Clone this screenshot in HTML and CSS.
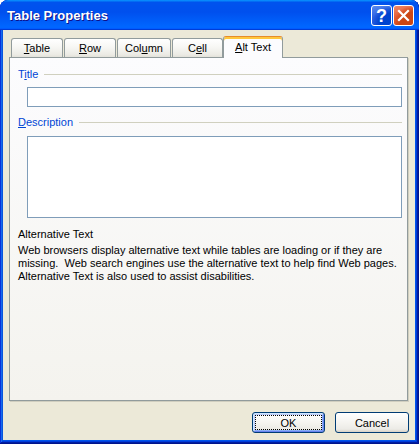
FILE: index.html
```html
<!DOCTYPE html>
<html>
<head>
<meta charset="utf-8">
<title>Table Properties</title>
<link rel="stylesheet" href="styles.css">
</head>
<body>
<div class="window">
  <div class="titlebar">
    <span class="title">Table Properties</span>
    <div class="controls">
      <span class="ctl help">?</span>
      <span class="ctl close">
        <svg width="13" height="13" viewBox="0 0 13 13"><path d="M2 2 L11 11 M11 2 L2 11" stroke="#fff" stroke-width="2.2" stroke-linecap="square"/></svg>
      </span>
    </div>
  </div>
  <div class="client">
    <div class="tabs">
      <div class="tab w52"><u>T</u>able</div>
      <div class="tab w52"><u>R</u>ow</div>
      <div class="tab w54">Col<u>u</u>mn</div>
      <div class="tab w51">C<u>e</u>ll</div>
      <div class="tab sel"><u>A</u>lt Text</div>
    </div>
    <div class="panel">
      <div class="group g-title"><span class="glabel">T<u>i</u>tle</span><span class="rule"></span></div>
      <div class="field input"></div>
      <div class="group g-desc"><span class="glabel"><u>D</u>escription</span><span class="rule"></span></div>
      <div class="field textarea"></div>
      <div class="help-title">Alternative Text</div>
      <p class="help-text">Web browsers display alternative text while tables are loading or if they are<br>missing.&nbsp; Web search engines use the alternative text to help find Web pages.<br>Alternative Text is also used to assist disabilities.</p>
    </div>
    <div class="buttons">
      <button class="btn default w73"><span class="focus">OK</span></button>
      <button class="btn w74">Cancel</button>
    </div>
  </div>
</div>
</body>
</html>
```
FILE: styles.css
```css
* { box-sizing: border-box; }
html, body { margin: 0; padding: 0; }
body {
  width: 419px;
  height: 444px;
  overflow: hidden;
  background: #ffffff;
  font-family: "Liberation Sans", Arial, sans-serif;
  font-size: 11px;
  color: #000;
}
.window {
  width: 419px;
  height: 444px;
  display: flex;
  flex-direction: column;
  background: #0055ea;
  border-radius: 8px 8px 0 0;
  box-shadow: inset -1px -1px #00138c, inset 1px 1px #0831d9, inset -2px -2px #001ea0, inset 2px 2px #166aee, inset -3px -3px #003bda, inset 3px 3px #0855dd;
  overflow: hidden;
}
.titlebar {
  height: 30px;
  flex: none;
  display: flex;
  justify-content: space-between;
  align-items: flex-start;
  padding: 0 5px 0 7px;
  border-radius: 8px 8px 0 0;
  background: linear-gradient(180deg, #0997ff 0%, #0053ee 8%, #0050ee 40%, #0066ff 88%, #0066ff 93%, #005bff 95%, #003dd7 96%, #003dd7 100%);
}
.title {
  color: #fff;
  font-weight: bold;
  font-size: 13px;
  line-height: 13px;
  margin-top: 9px;
  text-shadow: 1px 1px #0f1089;
}
.controls {
  display: flex;
  gap: 1px;
  padding-top: 5px;
}
.ctl {
  width: 21px;
  height: 21px;
  border: 1px solid #fff;
  border-radius: 3px;
  display: flex;
  align-items: center;
  justify-content: center;
}
.help {
  background: radial-gradient(circle at 90% 90%, #0043cf 0%, #0043cf 40%, rgba(0,0,0,0) 70%), linear-gradient(160deg, #5a8cf0 0%, #2d62e3 45%, #1a4fd8 100%);
  color: #fff;
  font-weight: bold;
  font-size: 18px;
  line-height: 18px;
  font-family: "Liberation Sans", Arial, sans-serif;
}
.close {
  background: radial-gradient(circle at 90% 90%, #cc4614 0%, #cc4614 45%, rgba(0,0,0,0) 70%), linear-gradient(160deg, #f08a6a 0%, #e35e38 45%, #d9481f 100%);
}
.client {
  flex: 1;
  margin: 0 4px 4px 3px;
  background: #ece9d8;
  padding: 6px 0 0 6px;
  display: flex;
  flex-direction: column;
}
.tabs {
  display: flex;
  align-items: flex-end;
  height: 21px;
  padding-left: 2px;
  position: relative;
  z-index: 1;
}
.tab {
  height: 19px;
  border: 1px solid #919b9c;
  border-bottom: none;
  border-radius: 3px 3px 0 0;
  background: linear-gradient(180deg, #ffffff 0%, #f7f7f4 45%, #ecebe5 85%, #e3e2da 100%);
  margin-right: 1px;
  text-align: center;
  line-height: 18px;
  white-space: nowrap;
}
.w52 { width: 52px; }
.w54 { width: 54px; }
.w51 { width: 51px; margin-right: 0; }
.tab.sel {
  width: 60px;
  height: 22px;
  margin-bottom: -1px;
  background: #fcfcfe;
  border-top: 1px solid #e68b2c;
  box-shadow: inset 0 2px #ffc73c;
  line-height: 19px;
  padding-top: 1px;
}
.panel {
  width: 399px;
  height: 344px;
  border: 1px solid #919b9c;
  box-shadow: 1px 1px 0 #d0cebf;
  background: linear-gradient(180deg, #fcfcfe 0%, #f4f3ee 100%);
  padding: 10px 5px 0 8px;
}
.group {
  display: flex;
  align-items: center;
  line-height: 13px;
  height: 13px;
  color: #0046d5;
}
.rule {
  flex: 1;
  height: 1px;
  background: #d0d0bf;
  margin-left: 6px;
}
.field {
  margin-left: 9px;
  border: 1px solid #7f9db9;
  background: #fff;
}
.input { height: 20px; margin-top: 6px; }
.g-desc { margin-top: 9px; }
.textarea { height: 82px; margin-top: 7px; }
.help-title { margin-top: 10px; line-height: 13px; }
.help-text {
  margin: 3px 0 0 0;
  line-height: 13px;
  white-space: nowrap;
}
.buttons {
  display: flex;
  justify-content: flex-end;
  gap: 10px;
  margin-top: 11px;
  padding-right: 6px;
}
.btn {
  height: 21px;
  border: 1px solid #003c74;
  border-radius: 3px;
  background: linear-gradient(180deg, #ffffff 0%, #f5f4f0 50%, #ecebe6 85%, #d6d0c5 100%);
  font-family: "Liberation Sans", Arial, sans-serif;
  font-size: 11px;
  color: #000;
  padding: 0;
  display: flex;
  align-items: center;
  justify-content: center;
}
.w73 { width: 73px; }
.w74 { width: 74px; }
.btn.default {
  box-shadow: inset 1px 1px #cee7ff, inset -1px -1px #6982ee, inset 2px 2px #bccbf8, inset -2px -2px #89adf6;
  padding: 2px;
}
.focus {
  flex: 1;
  align-self: stretch;
  display: flex;
  align-items: center;
  justify-content: center;
  border: 1px dotted #000;
}
```
